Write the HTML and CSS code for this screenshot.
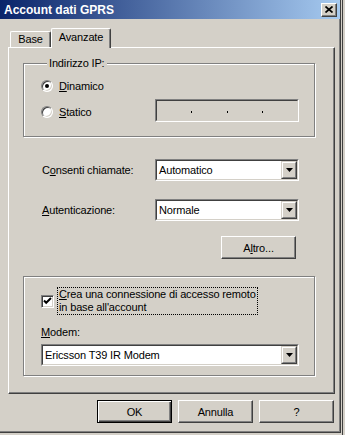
FILE: index.html
```html
<!DOCTYPE html>
<html lang="it">
<head>
<meta charset="utf-8">
<title>Account dati GPRS</title>
<link rel="stylesheet" href="styles.css">
</head>
<body>
<div class="screen">
  <div class="dialog">
    <div class="titlebar">
      <span class="title">Account dati GPRS</span>
      <span class="close"><svg width="8" height="7" viewBox="0 0 8 7"><path d="M0.5 0.5 L7.5 6.5 M7.5 0.5 L0.5 6.5" stroke="#000" stroke-width="1.7" fill="none"/></svg></span>
    </div>
    <div class="tabs">
      <div class="tab">Base</div>
      <div class="tab active">Avanzate</div>
    </div>
    <div class="panel">
      <div class="group g1">
        <span class="legend">Indirizzo IP:</span>
        <div class="radio-row r1">
          <span class="radio checked"></span><span class="lbl"><u>D</u>inamico</span>
        </div>
        <div class="radio-row r2">
          <div class="radio-opt"><span class="radio"></span><span class="lbl"><u>S</u>tatico</span></div>
          <div class="ipbox"><div class="ipbox-in"><span class="dot"></span><span class="dot"></span><span class="dot"></span></div></div>
        </div>
      </div>
      <div class="fields">
        <div class="field-row">
          <span class="flabel">C<u>o</u>nsenti chiamate:</span>
          <div class="combo"><div class="combo-in"><span class="combo-text">Automatico</span><span class="combo-btn"><span class="combo-btn-in"><svg width="7" height="4" viewBox="0 0 7 4"><path d="M0 0 H7 L3.5 4 Z" fill="#000"/></svg></span></span></div></div>
        </div>
        <div class="field-row fr2">
          <span class="flabel"><u>A</u>utenticazione:</span>
          <div class="combo"><div class="combo-in"><span class="combo-text">Normale</span><span class="combo-btn"><span class="combo-btn-in"><svg width="7" height="4" viewBox="0 0 7 4"><path d="M0 0 H7 L3.5 4 Z" fill="#000"/></svg></span></span></div></div>
        </div>
        <div class="altro-row">
          <button class="btn altro">A<u>l</u>tro...</button>
        </div>
      </div>
      <div class="group g2">
        <div class="check-row">
          <span class="checkbox"><svg width="9" height="9" viewBox="0 0 9 9"><path d="M1 3.5 L3.2 5.8 L8 1" stroke="#000" stroke-width="2" fill="none"/></svg></span>
          <span class="check-lbl"><u>C</u>rea una connessione di accesso remoto<br>in base all'account</span>
        </div>
        <div class="modem-lbl"><u>M</u>odem:</div>
        <div class="combo wide"><div class="combo-in"><span class="combo-text">Ericsson T39 IR Modem</span><span class="combo-btn"><span class="combo-btn-in"><svg width="7" height="4" viewBox="0 0 7 4"><path d="M0 0 H7 L3.5 4 Z" fill="#000"/></svg></span></span></div></div>
      </div>
    </div>
    <div class="buttons">
      <button class="btn default">OK</button>
      <button class="btn">Annulla</button>
      <button class="btn">?</button>
    </div>
  </div>
  <div class="backdrop"></div>
</div>
</body>
</html>
```

FILE: styles.css
```css
html, body {
  margin: 0;
  padding: 0;
  background: #d4d0c8;
}
body {
  font-family: "Liberation Sans", Arial, sans-serif;
  font-size: 11px;
  letter-spacing: -0.15px;
  color: #000;
}
u { text-decoration: underline; text-underline-offset: 1px; }

.screen {
  width: 345px;
  height: 435px;
  display: flex;
  overflow: hidden;
}
.dialog {
  width: 341px;
  height: 433px;
  flex: none;
  box-sizing: border-box;
  background: #d4d0c8;
  border-right: 1px solid #404040;
  border-bottom: 1px solid #404040;
  box-shadow: inset -1px -1px 0 #808080;
  display: flex;
  flex-direction: column;
}
.backdrop {
  flex: 1;
  border-left: 1px solid #d4d0c8;
  box-shadow: inset 1px 0 0 #404040;
}

/* Title bar */
.titlebar {
  height: 19px;
  box-sizing: border-box;
  display: flex;
  align-items: center;
  padding: 0 3px 0 4px;
  background: linear-gradient(to right, #0a246a, #a6caf0);
}
.title {
  color: #fff;
  font-weight: bold;
  font-size: 12px;
  letter-spacing: 0;
}
.close {
  margin-left: auto;
  width: 16px;
  height: 14px;
  box-sizing: border-box;
  background: #d4d0c8;
  border: 1px solid;
  border-color: #fff #404040 #404040 #fff;
  box-shadow: inset -1px -1px 0 #808080;
  display: flex;
  align-items: center;
  justify-content: center;
  padding: 0 1px 1px 0;
}
.close svg { display: block; }

/* Tabs */
.tabs {
  margin-top: 9px;
  height: 19px;
  display: flex;
  align-items: flex-end;
  padding-left: 10px;
}
.tab {
  width: 41px;
  height: 16px;
  box-sizing: border-box;
  border-top: 1px solid #fff;
  border-left: 1px solid #fff;
  border-right: 1px solid #404040;
  box-shadow: inset -1px 0 0 #808080;
  border-radius: 2px 2px 0 0;
  text-align: center;
  line-height: 15px;
}
.tab.active {
  width: 60px;
  height: 20px;
  margin-bottom: -1px;
  line-height: 17px;
  background: #d4d0c8;
  position: relative;
  z-index: 1;
}

/* Panel */
.panel {
  margin-left: 8px;
  width: 327px;
  height: 347px;
  box-sizing: border-box;
  border-top: 1px solid #fff;
  border-left: 1px solid #fff;
  border-right: 1px solid #404040;
  border-bottom: 1px solid #404040;
  box-shadow: inset -1px -1px 0 #808080;
  padding: 15px 0 0 14px;
}

.group {
  width: 292px;
  box-sizing: border-box;
  border: 1px solid #808080;
  box-shadow: 1px 1px 0 #fff, inset 1px 1px 0 #fff;
}
.g1 {
  height: 74px;
  padding: 0 15px 0 17px;
}
.legend {
  display: block;
  width: fit-content;
  margin: -7px 0 0 6px;
  padding: 0 2px;
  line-height: 13px;
  background: #d4d0c8;
}

.radio-row {
  display: flex;
  align-items: center;
}
.r1 {
  margin-top: 9px;
  height: 14px;
}
.r2 {
  margin-top: 6px;
  align-items: flex-start;
}
.radio-opt {
  display: flex;
  align-items: center;
  height: 14px;
  margin-top: 6px;
}
.radio {
  width: 12px;
  height: 12px;
  box-sizing: border-box;
  border-radius: 50%;
  border: 1px solid;
  border-color: #808080 #fff #fff #808080;
  box-shadow: inset 1px 1px 0 #404040, inset -1px -1px 0 #d4d0c8;
  background: #fff;
  margin-right: 6px;
  display: flex;
  align-items: center;
  justify-content: center;
}
.radio.checked::after {
  content: "";
  width: 4px;
  height: 4px;
  border-radius: 50%;
  background: #000;
}
.lbl { line-height: 14px; }

.ipbox {
  margin-left: auto;
  width: 144px;
  height: 23px;
  box-sizing: border-box;
  border: 1px solid;
  border-color: #808080 #fff #fff #808080;
}
.ipbox-in {
  height: 100%;
  box-sizing: border-box;
  border: 1px solid;
  border-color: #404040 #d4d0c8 #d4d0c8 #404040;
  display: flex;
  justify-content: space-evenly;
  align-items: center;
  padding-top: 2px;
}
.dot {
  width: 1px;
  height: 2px;
  background: #000;
}

/* Field rows */
.fields {
  margin-top: 22px;
  padding-left: 19px;
}
.field-row {
  display: flex;
  align-items: center;
  height: 22px;
}
.fr2 { margin-top: 18px; }
.flabel {
  width: 113px;
  flex: none;
}
.combo {
  width: 144px;
  height: 22px;
  box-sizing: border-box;
  border: 1px solid;
  border-color: #808080 #fff #fff #808080;
}
.combo.wide {
  width: 258px;
  margin-top: 5px;
}
.combo-in {
  height: 100%;
  box-sizing: border-box;
  border: 1px solid;
  border-color: #404040 #d4d0c8 #d4d0c8 #404040;
  background: #fff;
  display: flex;
  align-items: center;
}
.combo-text {
  padding-left: 2px;
  line-height: 14px;
}
.combo-btn {
  margin-left: auto;
  width: 16px;
  height: 18px;
  box-sizing: border-box;
  border: 1px solid;
  border-color: #d4d0c8 #404040 #404040 #d4d0c8;
  background: #d4d0c8;
}
.combo-btn-in {
  display: flex;
  height: 100%;
  box-sizing: border-box;
  border: 1px solid;
  border-color: #fff #808080 #808080 #fff;
  align-items: center;
  justify-content: center;
}
.combo-btn-in svg { display: block; }

.altro-row {
  margin-top: 15px;
  display: flex;
  justify-content: flex-end;
  width: 254px;
}

/* Buttons */
.btn {
  width: 75px;
  height: 23px;
  box-sizing: border-box;
  font: inherit;
  letter-spacing: inherit;
  color: #000;
  background: #d4d0c8;
  border: 1px solid;
  border-color: #fff #404040 #404040 #fff;
  box-shadow: inset -1px -1px 0 #808080;
  padding: 0;
  margin: 0;
  text-align: center;
}
.btn.default {
  border-color: #000;
  box-shadow: inset 1px 1px 0 #fff, inset -1px -1px 0 #404040, inset -2px -2px 0 #808080;
}
.buttons {
  margin-top: 6px;
  display: flex;
  justify-content: flex-end;
  gap: 6px;
  padding-right: 6px;
}

/* Group 2 */
.g2 {
  margin-top: 17px;
  height: 100px;
  padding: 11px 0 0 17px;
}
.check-row {
  display: flex;
  align-items: center;
}
.checkbox {
  width: 13px;
  height: 13px;
  box-sizing: border-box;
  flex: none;
  border: 1px solid;
  border-color: #808080 #fff #fff #808080;
  box-shadow: inset 1px 1px 0 #404040, inset -1px -1px 0 #d4d0c8;
  background: #fff;
  margin-right: 4px;
  display: flex;
  align-items: center;
  justify-content: center;
}
.checkbox svg { display: block; }
.check-lbl {
  line-height: 13px;
  padding: 0 1px;
  outline: 1px dotted #000;
  outline-offset: 0;
}
.modem-lbl {
  margin-top: 11px;
  line-height: 14px;
}
```
